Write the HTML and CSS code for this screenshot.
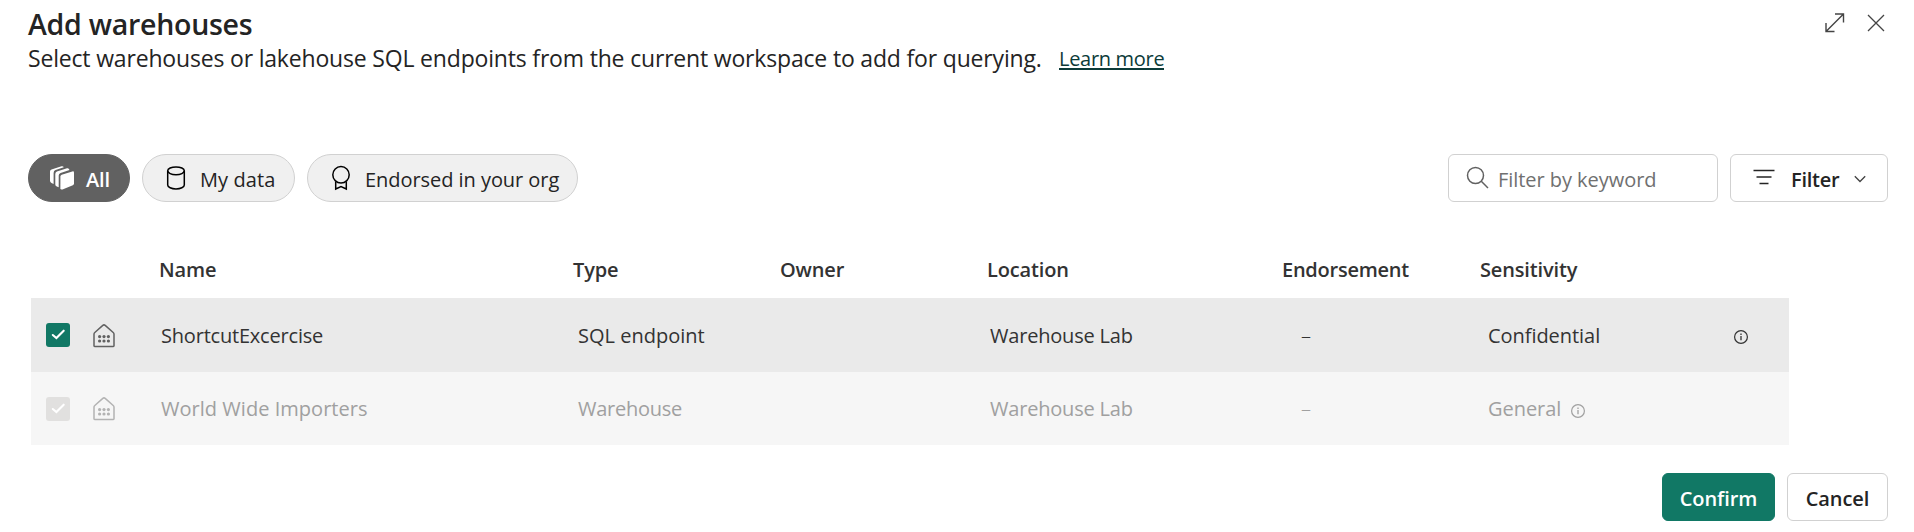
FILE: index.html
```
<!DOCTYPE html>
<html lang="en">
<head>
<meta charset="utf-8">
<title>Add warehouses</title>
<link rel="stylesheet" href="styles.css">
</head>
<body>
<svg width="0" height="0" class="defs" aria-hidden="true">
  <symbol id="house" viewBox="0 0 24 26"><path d="M2 11.2Q2 10.2 2.8 9.500L10.800 2.400Q12 1.400 13.200 2.400L21.200 9.500Q22 10.200 22 11.200V22.800Q22 23.500 21.300 23.500H2.700Q2 23.500 2 22.800Z" fill="none" stroke="currentColor" stroke-width="1.500"/><g fill="currentColor"><circle cx="7.600" cy="13.600" r="1.600"/><circle cx="12" cy="13.600" r="1.600"/><circle cx="16.400" cy="13.600" r="1.600"/><circle cx="7.600" cy="18" r="1.600"/><circle cx="12" cy="18" r="1.600"/><circle cx="16.400" cy="18" r="1.600"/></g></symbol>
  <symbol id="info" viewBox="0 0 16 16"><circle cx="8" cy="8" r="6.400" fill="none" stroke="currentColor" stroke-width="1.200"/><path d="M8 7v4.200M8 4.600v1.400" stroke="currentColor" stroke-width="1.300"/></symbol>
  <symbol id="check" viewBox="0 0 24 24"><path d="M6.800 12l3.600 3 7.300-7.300" fill="none" stroke="#fff" stroke-width="2.100" stroke-linecap="round"/></symbol>
</svg>
<main class="dialog">
  <header class="head">
    <div>
      <h1 class="title">Add warehouses</h1>
      <p class="subtitle"><span>Select warehouses or lakehouse SQL endpoints from the current workspace to add for querying.</span><a class="learn" href="#">Learn more</a></p>
    </div>
    <div class="window-actions">
      <svg width="22" height="22" viewBox="0 0 22 22" fill="none" stroke="#444" stroke-width="1.400"><path d="M11 2H19.500v8.500M19.500 2L2 19.500M2 11V19.500h8.500"/></svg>
      <svg width="18" height="18" viewBox="0 0 18 18" fill="none" stroke="#444" stroke-width="1.300"><path d="M1 1l16 16M17 1L1 17"/></svg>
    </div>
  </header>

  <section class="toolbar">
    <button class="pill pill-active"><svg width="24" height="24" viewBox="0 0 24 24" fill="#fff"><path d="M10.400 10.600Q10.400 9.200 11.700 8.700L22.300 5.400Q24 5 24 6.600V17.500Q24 18.800 22.800 19.300L12.500 23.400Q10.400 24 10.400 22.300Z"/><path d="M8.700 21.300L6.800 20.500Q5.300 19.900 5.300 18.500V8Q5.300 6.200 6.900 5.500L17 2.300Q18.900 1.900 19.500 3.900L10.600 6.900Q8.700 7.600 8.700 9.500Z"/><path d="M3.600 17.900L1.500 17Q0 16.200 0 14.800V5.600Q0 4 1.500 3.400L11.500 .300Q13.200-.100 13.800 1.300L5.500 4.100Q3.600 4.900 3.600 6.900Z"/></svg><span>All</span></button>
    <button class="pill pill-data"><svg width="20" height="26" viewBox="0 0 20 26" fill="none" stroke="#000" stroke-width="1.500"><ellipse cx="10" cy="5.800" rx="8.300" ry="3.900"/><path d="M1.700 5.800V20c0 2.100 3.700 3.900 8.300 3.900s8.300-1.800 8.300-3.900V5.800"/></svg><span>My data</span></button>
    <button class="pill pill-org"><svg width="20" height="26" viewBox="0 0 20 26" fill="none" stroke="#000" stroke-width="1.500"><circle cx="10" cy="9.800" r="8.200"/><path d="M4.700 16.400V24L10 21.500 15.300 24V16.400"/></svg><span>Endorsed in your org</span></button>
    <div class="tools">
      <div class="search"><svg width="24" height="24" viewBox="0 0 24 24" fill="none" stroke="#616161" stroke-width="1.500"><circle cx="9.500" cy="9.500" r="8"/><path d="M15.300 15.300L22 22"/></svg><span>Filter by keyword</span></div>
      <button class="filter"><svg width="22" height="16" viewBox="0 0 22 16" stroke="#242424" stroke-width="1.500"><path d="M.500 1.500h21M3.500 8h15M6.500 14.500h9"/></svg><span>Filter</span><svg width="12" height="8" viewBox="0 0 12 8" fill="none" stroke="#424242" stroke-width="1.300"><path d="M.800 1.200L6 6.500l5.200-5.300"/></svg></button>
    </div>
  </section>

  <section class="table">
    <div class="row row-head">
      <span></span><span></span><span class="h-name">Name</span><span class="h-type">Type</span><span class="h-owner">Owner</span><span class="h-location">Location</span><span class="h-endorse">Endorsement</span><span class="h-sens">Sensitivity</span>
    </div>
    <div class="row row-selected">
      <span class="box"><svg width="24" height="24"><use href="#check"/></svg></span>
      <svg class="house" width="24" height="26"><use href="#house"/></svg>
      <span class="name">ShortcutExcercise</span><span class="type">SQL endpoint</span><span></span><span class="location">Warehouse Lab</span><span class="endorse">–</span>
      <span class="sens sens-wide">Confidential<svg class="info" width="16" height="16"><use href="#info"/></svg></span>
    </div>
    <div class="row row-disabled">
      <span class="box"><svg width="24" height="24"><use href="#check"/></svg></span>
      <svg class="house" width="24" height="26"><use href="#house"/></svg>
      <span class="name name-loose">World Wide Importers</span><span class="type type-tight">Warehouse</span><span></span><span class="location">Warehouse Lab</span><span class="endorse">–</span>
      <span class="sens">General<svg class="info" width="16" height="16"><use href="#info"/></svg></span>
    </div>
  </section>

  <footer class="foot">
    <button class="btn btn-primary">Confirm</button>
    <button class="btn">Cancel</button>
  </footer>
</main>
</body>
</html>
```
FILE: styles.css
```
* { box-sizing: border-box; }
body {
  margin: 0;
  background: #fff;
  color: #242424;
  font: 20px/28px "Open Sans", "Noto Sans", sans-serif;
  letter-spacing: -0.1px;
}
.defs { display: block; position: absolute; }
button { font: inherit; letter-spacing: inherit; color: inherit; margin: 0; }
svg { flex: none; display: block; }

.dialog {
  width: 1914px;
  height: 532px;
  padding: 7px 26px 0 28px;
}

.head { display: flex; justify-content: space-between; height: 147px; }
.title { margin: 0; font-size: 28.5px; line-height: 34px; font-weight: 600; letter-spacing: -0.26px; }
.subtitle {
  margin: 0;
  padding-top: 1px;
  display: flex;
  align-items: center;
  font-size: 23px;
  line-height: 32px;
  letter-spacing: -0.18px;
}
.subtitle span { width: 1031px; white-space: nowrap; }
.learn {
  color: #0c3b39;
  font-size: 20px;
  line-height: 24px;
  letter-spacing: -0.3px;
  text-decoration: none;
  border-bottom: 2px solid #0c3b39;
  height: 24px;
  padding-top: 1px;
}
.window-actions { display: flex; gap: 21px; padding: 3px 3px 0 0; height: 28px; align-items: center; }

.toolbar { display: flex; gap: 12px; height: 48px; }
.pill {
  display: flex;
  align-items: center;
  height: 48px;
  border: 1px solid #d1d1d1;
  border-radius: 24px;
  background: #f0f0f0;
  padding: 0;
  white-space: nowrap;
}
.pill span, .search span, .filter span { padding-top: 3px; }
.pill-active { width: 102px; padding-left: 21px; gap: 12px; background: #616161; border-color: #616161; color: #fff; font-weight: 600; }
.pill-data { width: 153px; padding-left: 23px; gap: 14px; letter-spacing: 0.1px; }
.pill-org { width: 271px; padding-left: 23px; gap: 14px; letter-spacing: -0.05px; }
.tools { display: flex; gap: 12px; margin-left: auto; }
.search, .filter, .btn {
  height: 48px;
  border: 1px solid #d1d1d1;
  border-radius: 6px;
  background: #fff;
  display: flex;
  align-items: center;
  padding: 0;
  white-space: nowrap;
}
.search { width: 270px; padding-left: 17px; gap: 8px; color: #707070; letter-spacing: -0.05px; }
.filter { width: 158px; padding-left: 22px; font-weight: 600; }
.filter span { margin: 0 15px 0 16px; letter-spacing: -0.25px; }
.filter svg { margin-top: -2px; }
.filter svg:last-child { margin-top: 2px; }

.table { margin: 38px 0 0 3px; width: 1758px; }
.row {
  display: grid;
  grid-template-columns: 62px 64px 415px 207px 207px 294px 199px 310px;
  align-items: center;
  height: 73px;
  white-space: nowrap;
  color: #333;
}
.row-head { height: 58px; padding-top: 2px; font-weight: 600; letter-spacing: -0.15px; }
.h-type, .h-owner, .h-location, .h-sens { padding-left: 1px; }
.h-name { padding-left: 2px; }
.h-endorse { padding-left: 2px; letter-spacing: -0.25px; }
.row-selected { background: #eaeaea; height: 74px; }
.row-disabled { background: #f6f6f6; color: #a0a0a0; }
.box { width: 24px; height: 24px; margin-left: 15px; border-radius: 3px; background: #117865; }
.row-disabled .box { background: #e1e0df; }
.house { color: #616161; margin: 1px 0 0 -1px; }
.row-disabled .house { color: #b3b3b3; }
.name { padding-left: 4px; letter-spacing: -0.2px; }
.name-loose { letter-spacing: 0.03px; }
.type { padding-left: 6px; letter-spacing: 0; }
.type-tight { letter-spacing: -0.25px; }
.location { padding-left: 4px; letter-spacing: -0.2px; }
.endorse { padding-left: 21px; font-weight: 300; }
.name, .type, .location, .endorse, .sens { padding-top: 1px; }
.sens { display: flex; align-items: center; gap: 9px; padding-left: 9px; letter-spacing: -0.05px; }
.sens-wide { justify-content: space-between; padding-right: 40px; }
.info { margin-top: 3px; }

.foot { display: flex; justify-content: flex-end; gap: 12px; margin-top: 28px; }
.btn { width: 101px; justify-content: center; font-weight: 600; padding: 3px 0 0; }
.btn-primary { width: 113px; background: #117865; border-color: #117865; color: #fff; }
```
